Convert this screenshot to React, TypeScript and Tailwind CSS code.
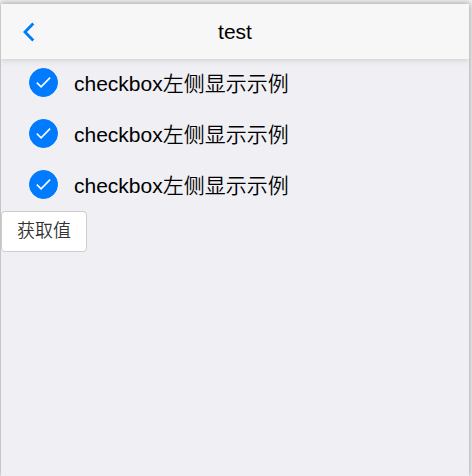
import { useState } from 'react'

const OPTIONS = [
  { id: 'option-1', label: 'checkbox左侧显示示例' },
  { id: 'option-2', label: 'checkbox左侧显示示例' },
  { id: 'option-3', label: 'checkbox左侧显示示例' },
]

export default function App() {
  const [checked, setChecked] = useState(OPTIONS.map(o => o.id))

  function toggle(id: string) {
    setChecked(prev => (prev.includes(id) ? prev.filter(c => c !== id) : [...prev, id]))
  }

  return (
    <div className="flex min-h-screen overflow-hidden bg-[#f0f0f0] pl-px pr-[3px] pt-1 font-['Liberation_Sans','Noto_Sans_CJK_SC',sans-serif] font-[350] text-black">
      <div className="flex-1 bg-[#efeff4] shadow-[0_0_6px_rgba(0,0,0,0.4)]">
        <header className="grid h-[55px] grid-cols-[56px_1fr_56px] items-center bg-[#f7f7f7] shadow-[0_1px_6px_#ccc]">
          <button aria-label="返回" className="flex h-full items-center justify-center">
            <svg width="12" height="20" viewBox="0 0 12 20" fill="none" stroke="#007aff" strokeWidth="2.8">
              <path d="M10.3 1.6 2 10l8.3 8.4" />
            </svg>
          </button>
          <h1 className="text-center text-[21px] leading-7">test</h1>
        </header>

        <form onSubmit={e => e.preventDefault()}>
          <div className="flex flex-col gap-px">
            {OPTIONS.map(({ id, label }) => (
              <div key={id} className="flex h-[50px] items-center gap-4 pl-7">
                <span className="mb-1 grid size-[29px] shrink-0">
                  <input
                    id={id}
                    type="checkbox"
                    checked={checked.includes(id)}
                    onChange={() => toggle(id)}
                    className="peer col-start-1 row-start-1 appearance-none rounded-full border border-[#c7c7cc] bg-white checked:border-[#007aff] checked:bg-[#007aff]"
                  />
                  <svg
                    viewBox="0 0 29 29"
                    fill="none"
                    stroke="white"
                    strokeWidth="1.6"
                    className="pointer-events-none invisible col-start-1 row-start-1 peer-checked:visible"
                  >
                    <path d="M7.8 14.6l4.3 4.3 9-9.3" />
                  </svg>
                </span>
                <label htmlFor={id} className="text-[21px] leading-7">{label}</label>
              </div>
            ))}
          </div>

          <button
            type="submit"
            className="block rounded-[4px] border border-[#ccc] bg-white px-[15px] py-1.5 text-[18px] leading-[27px] text-[#333]"
          >
            获取值
          </button>
        </form>
      </div>
    </div>
  )
}
